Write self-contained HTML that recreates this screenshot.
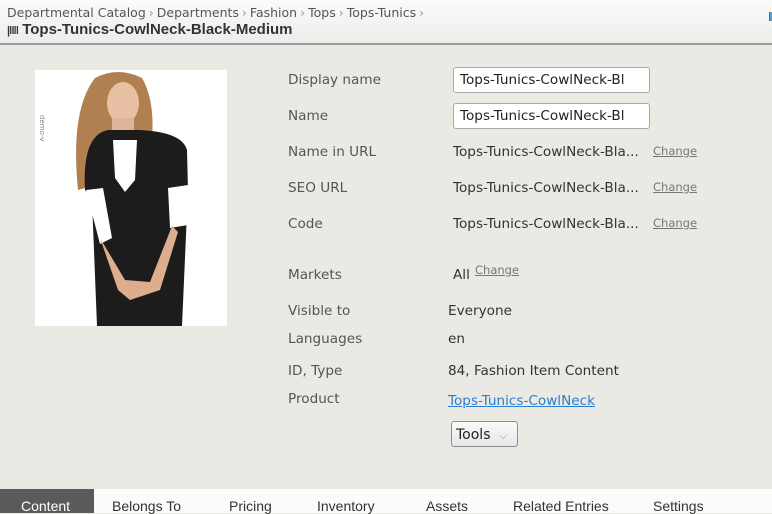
<!DOCTYPE html>
<html><head><meta charset="utf-8"><style>
*{margin:0;padding:0;box-sizing:border-box}
body{width:772px;height:513px;overflow:hidden;background:#eae9e3;font-family:"DejaVu Sans","Liberation Sans",sans-serif;font-size:13.6px;color:#333;position:relative}
.hdr{position:absolute;left:0;top:0;width:772px;height:45px;background:linear-gradient(#fbfbfa,#ececea);border-bottom:2px solid #9a9a9a}
.bc{position:absolute;left:7px;top:5px;font-size:12.5px;color:#555;white-space:nowrap}
.bc span{color:#999;margin:0 3px}
.title{position:absolute;left:7px;top:21px;font-family:"Liberation Sans",sans-serif;font-weight:bold;font-size:15px;color:#333;white-space:nowrap}
.a{position:absolute;white-space:nowrap}
.l{color:#555}
.inp{position:absolute;left:453px;width:197px;height:26px;background:#fff;border:1px solid #a9a9a9;border-radius:3px;padding:4px 0 0 6px;color:#222;font-size:13.6px;white-space:nowrap;overflow:hidden}
.ch{color:#777;text-decoration:underline;font-size:11.5px}
.tabs{position:absolute;left:0;top:489px;width:772px;height:24px;background:#fbfbfa;font-family:"Liberation Sans",sans-serif;font-size:14px;color:#333}
.tabs div{position:absolute;top:9px}
</style></head><body>
<div class="hdr">
<div class="bc">Departmental Catalog<span>›</span>Departments<span>›</span>Fashion<span>›</span>Tops<span>›</span>Tops-Tunics<span>›</span></div>
<div class="title"><span style="font-size:11px;letter-spacing:-1px">|‖‖</span> Tops-Tunics-CowlNeck-Black-Medium</div>
<div style="position:absolute;left:769px;top:12px;width:3px;height:9px;background:#5a9ed6;border-left:1px solid #8a5a2a"></div>
</div>
<svg class="a" style="left:35px;top:70px" width="192" height="256" viewBox="35 70 192 256">
<rect x="35" y="70" width="192" height="256" fill="#fff"/>
<path d="M78 190 Q70 110 95 78 Q118 66 142 78 Q155 100 152 140 L150 170 Z" fill="#b08050"/>
<ellipse cx="123" cy="103" rx="16" ry="21" fill="#e8c0a4"/>
<rect x="112" y="118" width="22" height="20" fill="#e0b498"/>
<path d="M85 190 Q82 135 108 130 L140 130 Q182 132 187 150 L188 190 L182 326 L97 326 L92 200 Z" fill="#1c1c1c"/>
<path d="M113 140 L137 140 L135 180 L125 192 L115 178 Z" fill="#fff"/>
<path d="M86 190 L103 188 L112 238 L100 244 Z" fill="#fff"/>
<path d="M168 188 L188 185 L188 225 L170 228 Z" fill="#fff"/>
<path d="M100 238 L125 280 L150 282 L172 226 L178 232 L160 290 L130 300 L118 290 Z" fill="#dcae8e"/>
<text x="40" y="115" font-size="7" fill="#888" transform="rotate(90 40 115)">demo-v</text>
</svg>
<div class="a l" style="left:288px;top:72px">Display name</div>
<div class="inp" style="top:67px">Tops-Tunics-CowlNeck-Bl</div>
<div class="a l" style="left:288px;top:108px">Name</div>
<div class="inp" style="top:103px">Tops-Tunics-CowlNeck-Bl</div>
<div class="a l" style="left:288px;top:144px">Name in URL</div>
<div class="a" style="left:453px;top:144px">Tops-Tunics-CowlNeck-Bla...</div><div class="a ch" style="left:653px;top:144px">Change</div>
<div class="a l" style="left:288px;top:180px">SEO URL</div>
<div class="a" style="left:453px;top:180px">Tops-Tunics-CowlNeck-Bla...</div><div class="a ch" style="left:653px;top:180px">Change</div>
<div class="a l" style="left:288px;top:216px">Code</div>
<div class="a" style="left:453px;top:216px">Tops-Tunics-CowlNeck-Bla...</div><div class="a ch" style="left:653px;top:216px">Change</div>
<div class="a l" style="left:288px;top:267px">Markets</div>
<div class="a" style="left:453px;top:267px">All</div><div class="a ch" style="left:475px;top:263px">Change</div>
<div class="a l" style="left:288px;top:303px">Visible to</div><div class="a" style="left:448px;top:303px">Everyone</div>
<div class="a l" style="left:288px;top:331px">Languages</div><div class="a" style="left:448px;top:331px">en</div>
<div class="a l" style="left:288px;top:363px">ID, Type</div><div class="a" style="left:448px;top:363px">84, Fashion Item Content</div>
<div class="a l" style="left:288px;top:391px">Product</div><div class="a" style="left:448px;top:393px;color:#2a7fd4;text-decoration:underline">Tops-Tunics-CowlNeck</div>
<div class="a" style="left:451px;top:421px;width:67px;height:26px;border:1px solid #8a9096;border-radius:3px;background:linear-gradient(#fafafa,#e6e6e6);padding:5px 0 0 4px;font-size:14px;color:#222">Tools <span style="color:#999;font-size:11px;margin-left:4px">⌵</span></div>
<div class="tabs">
<div style="left:0;top:0;width:94px;height:24px;background:#5a5a5a"></div>
<div style="left:21px;color:#fff">Content</div>
<div style="left:112px">Belongs To</div>
<div style="left:229px">Pricing</div>
<div style="left:317px">Inventory</div>
<div style="left:426px">Assets</div>
<div style="left:513px">Related Entries</div>
<div style="left:653px">Settings</div>
</div>
</body></html>
